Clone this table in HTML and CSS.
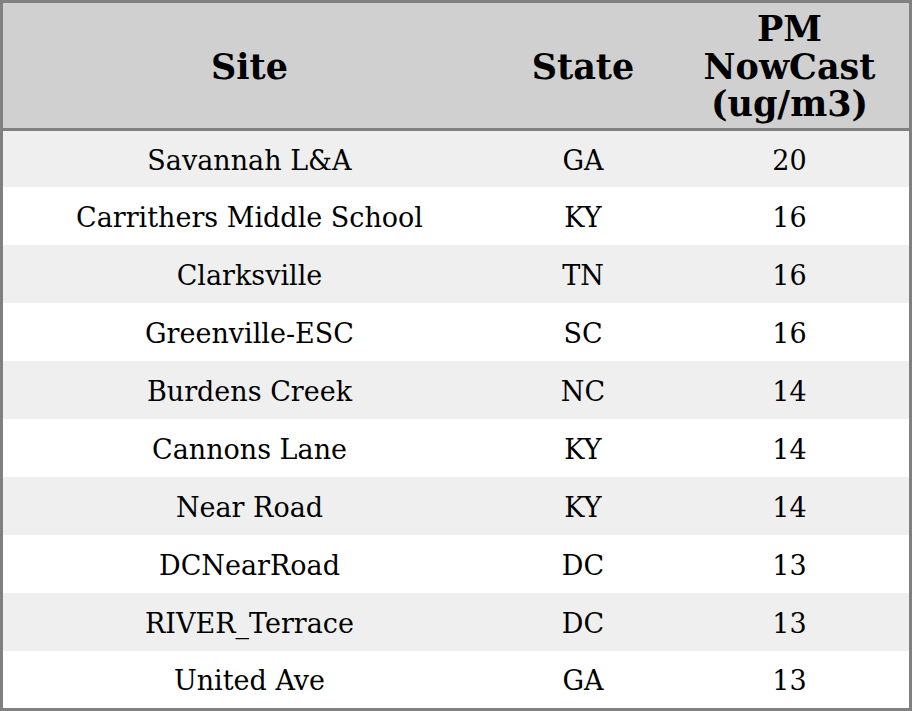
FILE: index.html
```html
<!DOCTYPE html>
<html>
<head>
<meta charset="utf-8">
<link rel="stylesheet" href="styles.css">
</head>
<body>
<table class="data">
  <thead>
    <tr class="head-row">
      <th class="c-site">Site</th>
      <th class="c-state">State</th>
      <th class="c-pm">PM NowCast (ug/m3)</th>
    </tr>
  </thead>
  <tbody>
    <tr class="row-first"><td>Savannah L&amp;A</td><td>GA</td><td>20</td></tr>
    <tr><td>Carrithers Middle School</td><td>KY</td><td>16</td></tr>
    <tr><td>Clarksville</td><td>TN</td><td>16</td></tr>
    <tr><td>Greenville-ESC</td><td>SC</td><td>16</td></tr>
    <tr><td>Burdens Creek</td><td>NC</td><td>14</td></tr>
    <tr><td>Cannons Lane</td><td>KY</td><td>14</td></tr>
    <tr><td>Near Road</td><td>KY</td><td>14</td></tr>
    <tr><td>DCNearRoad</td><td>DC</td><td>13</td></tr>
    <tr><td>RIVER_Terrace</td><td>DC</td><td>13</td></tr>
    <tr class="row-last"><td>United Ave</td><td>GA</td><td>13</td></tr>
  </tbody>
</table>
</body>
</html>
```
FILE: styles.css
```css
html, body {
  margin: 0;
  padding: 0;
  background: #ffffff;
}

.data {
  width: 912px;
  border: 3px solid #808080;
  border-collapse: separate;
  border-spacing: 0;
  table-layout: fixed;
  font-family: "DejaVu Serif", serif;
  color: #000000;
}

.c-site { width: 493px; }
.c-state { width: 174px; }
.c-pm { width: 239px; }

.data th {
  background: #d0d0d0;
  font-size: 35px;
  font-weight: bold;
  line-height: 37.5px;
  height: 125px;
  padding: 2px 20px 0;
  box-sizing: border-box;
  border-bottom: 3px solid #808080;
  text-align: center;
  vertical-align: middle;
}

.data th.c-pm {
  padding: 2px 10px 0;
}

.head-row {
  height: 128px;
}

.data td {
  font-size: 27px;
  line-height: 31px;
  height: 58px;
  box-sizing: border-box;
  padding: 2px 0 0;
  text-align: center;
  vertical-align: middle;
}

.data tbody tr.row-first td {
  height: 56px;
}

.data tbody tr.row-last td {
  height: 57px;
}

.data tbody tr:nth-child(odd) td {
  background: #efefef;
}

.data tbody tr:nth-child(even) td {
  background: #ffffff;
}
```
